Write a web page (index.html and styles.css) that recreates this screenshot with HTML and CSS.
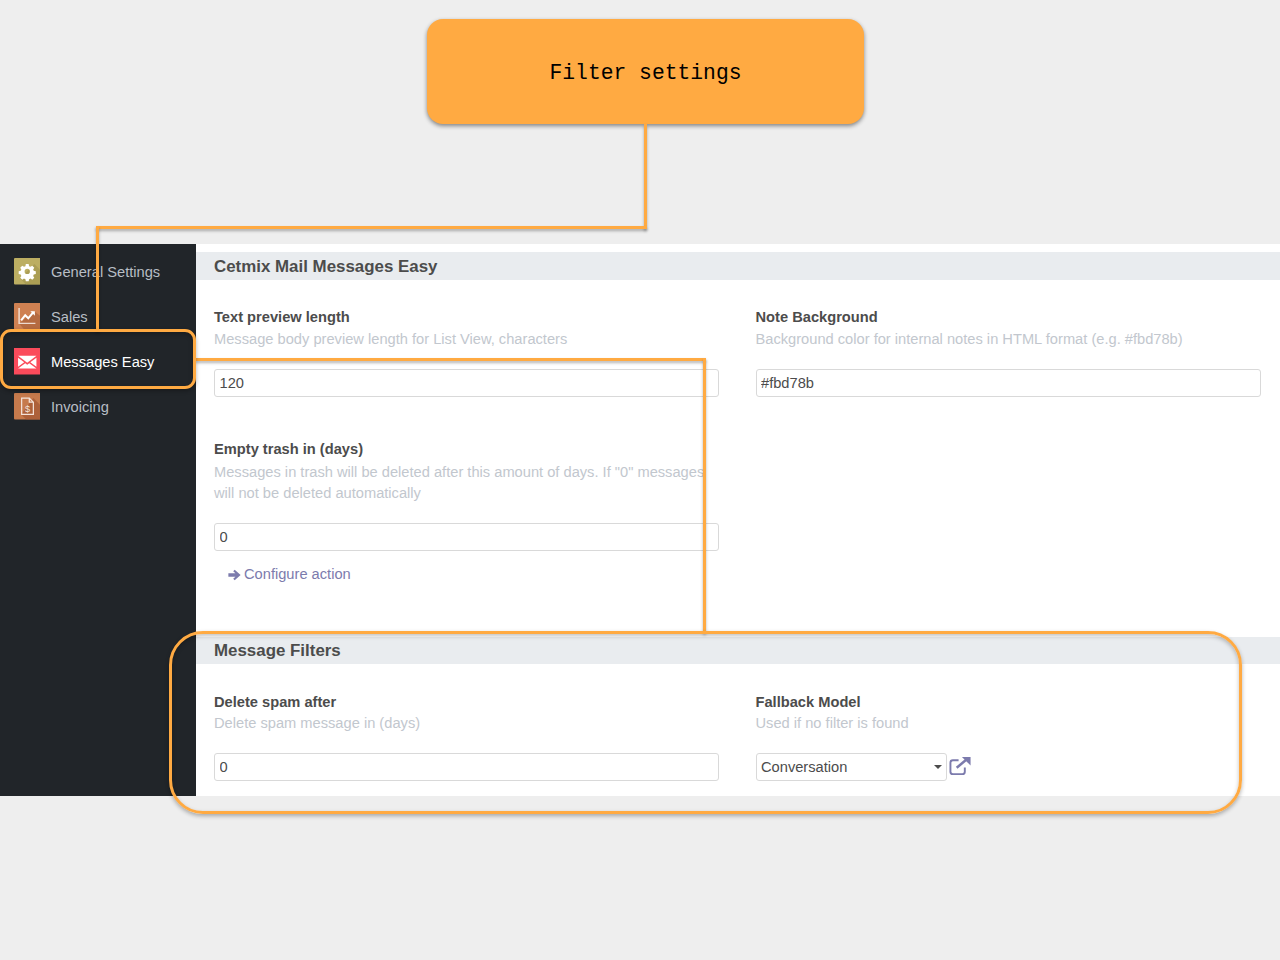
FILE: index.html
```html
<!DOCTYPE html>
<html>

<head>
    <title>Filter settings</title>
    <meta charset="utf-8">
    <link rel="stylesheet" href="styles.css">
</head>

<body>
    <div class="app">
        <nav class="sidebar">
            <a class="app-item">
                <svg class="app-icon" viewBox="0 0 26 26">
                    <rect width="26" height="26" rx="1" fill="#bcae62" />
                    <path d="M6 20 L20 6 L26 12 V26 H12 Z" fill="#a4974f" opacity=".7" />
                    <path fill="#fff" fill-rule="evenodd"
                        d="M11.6 6h2.8l.4 2 1.4.6 1.700-1.100 2 2-1.100 1.700.6 1.400 2 .4v2.800l-2 .4-.6 1.400 1.100 1.700-2 2-1.700-1.100-1.400.6-.4 2h-2.800l-.4-2-1.400-.6-1.700 1.100-2-2 1.100-1.700-.6-1.400-2-.4v-2.800l2-.4.6-1.400-1.100-1.700 2-2 1.700 1.100 1.400-.6z M13 10.600a2.600 2.600 0 1 0 0 5.200 2.600 2.600 0 0 0 0-5.200z" />
                </svg>
                <span>General Settings</span>
            </a>
            <a class="app-item">
                <svg class="app-icon" viewBox="0 0 26 26">
                    <rect width="26" height="26" rx="1" fill="#cf8152" />
                    <path d="M5 20 L20 8 L26 13 V26 H10 Z" fill="#a9623a" opacity=".7" />
                    <path d="M5 5 V20 H21" fill="none" stroke="#fff" stroke-width="1.400" opacity=".75" />
                    <path d="M7 17 L11 12 L14 15 L19 9" fill="none" stroke="#fff" stroke-width="2" />
                    <path d="M16 8 H20.500 V12.500 Z" fill="#fff" />
                </svg>
                <span>Sales</span>
            </a>
            <a class="app-item current">
                <svg class="app-icon" viewBox="0 0 26 26">
                    <rect width="26" height="26" fill="#fb4b5b" />
                    <path d="M4 7.500 H22 L13 14.500 Z" fill="#fff" />
                    <path d="M4 9.500 L10 14 L4 18.500 Z M22 9.500 L16 14 L22 18.500 Z" fill="#fff" />
                    <path d="M4 20 L11 15 L13 16.500 L15 15 L22 20 Z" fill="#fff" />
                </svg>
                <span>Messages Easy</span>
            </a>
            <a class="app-item">
                <svg class="app-icon" viewBox="0 0 26 26">
                    <rect width="26" height="26" rx="1" fill="#c67a4c" />
                    <path d="M7 21 L19 5 L26 12 V26 H12 Z" fill="#a25733" opacity=".7" />
                    <path d="M7.500 5 H15 L19 9 V21 H7.500 Z M15 5 V9 H19" fill="none" stroke="#f4e3d9" stroke-width="1.200" />
                    <text x="13.200" y="18.500" class="dollar">$</text>
                </svg>
                <span>Invoicing</span>
            </a>
        </nav>

        <main class="content">
            <h2 class="section-title">Cetmix Mail Messages Easy</h2>
            <div class="settings">
                <div class="setting">
                    <label>Text preview length</label>
                    <p class="hint">Message body preview length for List View, characters</p>
                    <input class="field" type="text" value="120">
                </div>
                <div class="setting">
                    <label>Note Background</label>
                    <p class="hint">Background color for internal notes in HTML format (e.g. #fbd78b)</p>
                    <input class="field" type="text" value="#fbd78b">
                </div>
                <div class="setting">
                    <label>Empty trash in (days)</label>
                    <p class="hint long">Messages in trash will be deleted after this amount of days. If "0" messages will not be deleted automatically</p>
                    <input class="field" type="text" value="0">
                    <a class="action-link">
                        <svg class="arrow" viewBox="0 0 14 12">
                            <path d="M7.200 .4 L13.600 6 L7.200 11.600 L5.600 10 L8 7.800 H.4 V4.200 H8 L5.600 2 Z" />
                        </svg>
                        Configure action
                    </a>
                </div>
            </div>

            <h2 class="section-title second">Message Filters</h2>
            <div class="settings last">
                <div class="setting">
                    <label>Delete spam after</label>
                    <p class="hint">Delete spam message in (days)</p>
                    <input class="field" type="text" value="0">
                </div>
                <div class="setting">
                    <label>Fallback Model</label>
                    <p class="hint">Used if no filter is found</p>
                    <div class="model-row">
                        <div class="select-wrap">
                            <select class="field">
                                <option>Conversation</option>
                            </select>
                        </div>
                        <svg class="external" viewBox="0 0 24 20">
                            <path d="M16.500 11.500 V16 a2.500 2.500 0 0 1-2.500 2.500 H4 A2.500 2.500 0 0 1 1.500 16 V6.500 A2.500 2.500 0 0 1 4 4 H10" fill="none" stroke="#7c7bad" stroke-width="2" />
                            <path d="M8 11.800 L18 3.500" fill="none" stroke="#7c7bad" stroke-width="2.600" />
                            <path d="M13.500 .5 H22.500 V9.500 Z" fill="#7c7bad" />
                        </svg>
                    </div>
                </div>
            </div>
        </main>
    </div>

    <!-- annotations over the screenshot -->
    <div class="callout">Filter settings</div>
    <div class="line line-a"></div>
    <div class="line line-b"></div>
    <div class="line line-c"></div>
    <div class="line line-d"></div>
    <div class="line line-e"></div>
    <div class="frame frame-menu"></div>
    <div class="frame frame-filters"></div>
</body>

</html>
```

FILE: styles.css
```css
body {
    margin: 0;
    height: 960px;
    padding-top: 244px;
    box-sizing: border-box;
    position: relative;
    overflow: hidden;
    background-color: #eeeeee;
    font-family: "Liberation Sans", Arial, sans-serif;
    font-size: 14.67px;
    color: #4c4c4c;
}

.app {
    display: flex;
    height: 552px;
    background-color: #fff;
}

.sidebar {
    width: 196px;
    flex: none;
    background-color: #212529;
    padding-top: 5px;
    box-sizing: border-box;
}

.app-item {
    display: flex;
    align-items: center;
    gap: 11px;
    height: 45px;
    padding-left: 13.500px;
    color: #b8bec5;
}

.app-item.current {
    color: #fff;
}

.app-icon {
    width: 26.500px;
    height: 26.500px;
    flex: none;
}

.dollar {
    font-family: "Liberation Sans", sans-serif;
    font-size: 9px;
    fill: #f4e3d9;
    text-anchor: middle;
}

.content {
    flex: 1;
    padding-top: 8px;
}

.section-title {
    margin: 0;
    height: 28px;
    padding-left: 18px;
    background-color: #e9ecef;
    font-size: 16.900px;
    line-height: 30px;
    font-weight: bold;
    color: #4c4c4c;
}

.section-title.second {
    height: 27px;
    line-height: 27px;
}

.settings {
    display: grid;
    grid-template-columns: 505px 505px;
    column-gap: 36.500px;
    row-gap: 42px;
    padding: 27px 0 52px 18px;
}

.settings.last {
    padding-top: 28px;
    padding-bottom: 0;
}

label {
    display: block;
    line-height: 21px;
    font-weight: bold;
}

.hint {
    margin: 1px 0 19px;
    line-height: 21px;
    color: #c2c7ce;
}

.hint.long {
    margin-top: 2px;
}

.settings.last .hint {
    margin-top: 0;
}

.field {
    display: block;
    width: 100%;
    height: 28px;
    box-sizing: border-box;
    padding: 0 4.500px;
    border: 1px solid #d9d9d9;
    border-radius: 3px;
    background-color: #fff;
    font-family: inherit;
    font-size: 14.67px;
    color: #4c4c4c;
    appearance: none;
    outline: none;
}

.action-link {
    display: flex;
    align-items: center;
    gap: 3px;
    margin: 13px 0 0 14px;
    line-height: 21px;
    color: #7c7bad;
}

.arrow {
    width: 13px;
    height: 12px;
    fill: #7c7bad;
}

.model-row {
    display: flex;
    align-items: center;
    gap: 2px;
}

.select-wrap {
    position: relative;
    width: 191.500px;
}

.select-wrap::after {
    content: "";
    position: absolute;
    top: 12px;
    right: 5px;
    border-left: 4px solid transparent;
    border-right: 4px solid transparent;
    border-top: 4px solid #4c4c4c;
}

.external {
    width: 23px;
    height: 20px;
    margin-top: -3px;
}

/* annotations */
.callout {
    position: absolute;
    left: 427px;
    top: 19px;
    width: 437px;
    height: 105px;
    padding-top: 2px;
    box-sizing: border-box;
    border-radius: 16px;
    background-color: #ffaa42;
    box-shadow: 0 2px 4px rgba(0, 0, 0, .45);
    display: flex;
    align-items: center;
    justify-content: center;
    font-family: "Liberation Mono", monospace;
    font-size: 21.330px;
    color: #000;
}

.line {
    position: absolute;
    background-color: #ffaa42;
    box-shadow: 0 2px 3px rgba(0, 0, 0, .3);
}

.line-a {
    left: 644px;
    top: 124px;
    width: 3px;
    height: 105px;
}

.line-b {
    left: 96px;
    top: 226px;
    width: 551px;
    height: 3px;
}

.line-c {
    left: 96px;
    top: 226px;
    width: 3px;
    height: 105px;
}

.line-d {
    left: 195px;
    top: 358px;
    width: 511px;
    height: 3px;
}

.line-e {
    left: 703px;
    top: 358px;
    width: 3px;
    height: 275px;
}

.frame {
    position: absolute;
    box-sizing: border-box;
    border: 3px solid #ffaa42;
    box-shadow: 0 2px 4px rgba(0, 0, 0, .3), inset 0 2px 4px rgba(0, 0, 0, .25);
}

.frame-menu {
    left: 0;
    top: 329px;
    width: 196px;
    height: 60px;
    border-radius: 11px;
}

.frame-filters {
    left: 169px;
    top: 631px;
    width: 1073px;
    height: 183px;
    border-radius: 34px;
}
```
